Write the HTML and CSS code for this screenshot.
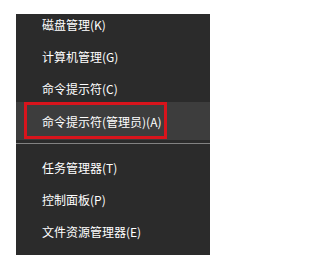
FILE: index.html
```html
<!DOCTYPE html>
<html lang="zh-CN">
<head>
<meta charset="utf-8">
<link rel="stylesheet" href="styles.css">
</head>
<body>
<div class="menu">
  <ul class="group group-top">
    <li class="item">磁盘管理(K)</li>
    <li class="item">计算机管理(G)</li>
    <li class="item item-short">命令提示符(C)</li>
    <li class="item item-active">命令提示符(管理员)(A)<span class="frame"></span></li>
  </ul>
  <div class="sep"></div>
  <ul class="group group-bottom">
    <li class="item">任务管理器(T)</li>
    <li class="item">控制面板(P)</li>
    <li class="item">文件资源管理器(E)</li>
  </ul>
</div>
</body>
</html>
```

FILE: styles.css
```css
html, body {
  margin: 0;
  padding: 0;
  background: #ffffff;
}
body {
  padding: 14px 0 0 16px;
  font-family: "Noto Sans CJK SC", "Noto Sans", sans-serif;
}
.menu {
  width: 194px;
  height: 241px;
  background: #2b2b2b;
  overflow: hidden;
}
.group {
  list-style: none;
  margin: 0;
  padding: 0;
}
.group-top {
  margin-top: -6px;
}
.group-bottom {
  padding-top: 7px;
}
.item {
  position: relative;
  box-sizing: border-box;
  height: 32px;
  display: flex;
  align-items: center;
  padding-left: 26px;
  font-size: 12px;
  color: #ffffff;
  white-space: nowrap;
}
.item-short {
  height: 30px;
  padding-top: 2px;
}
.item-active {
  height: 38px;
  padding-top: 1px;
  background: #3d3d3d;
}
.frame {
  position: absolute;
  left: 8px;
  top: 0;
  width: 143px;
  height: 37px;
  box-sizing: border-box;
  border: 3px solid #d8141c;
}
.sep {
  margin-top: 3px;
  height: 1px;
  background: #828282;
}
```
